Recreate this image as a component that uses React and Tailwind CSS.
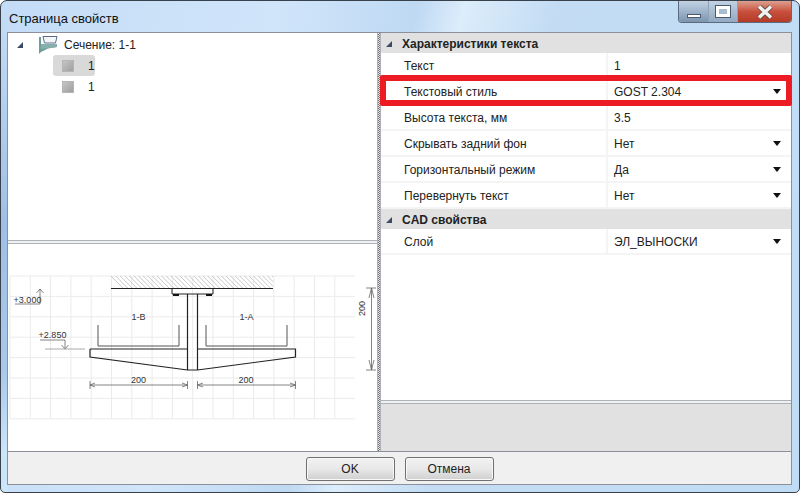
const rows1 = [
  { name: "Текст", value: "1" },
  { name: "Текстовый стиль", value: "GOST 2.304", drop: true },
  { name: "Высота текста, мм", value: "3.5" },
  { name: "Скрывать задний фон", value: "Нет", drop: true },
  { name: "Горизонтальный режим", value: "Да", drop: true },
  { name: "Перевернуть текст", value: "Нет", drop: true },
];
const rows2 = [{ name: "Слой", value: "ЭЛ_ВЫНОСКИ", drop: true }];

function Expander({ className }) {
  return (
    <svg width="6" height="6" viewBox="0 0 6 6" className={className}>
      <path d="M6 0V6H0Z" fill="#3b4a66" />
    </svg>
  );
}

function ItemIcon() {
  return (
    <svg width="12" height="12" viewBox="0 0 12 12" className="shrink-0">
      <defs>
        <linearGradient id="sq" x1="0" y1="0" x2="1" y2="1">
          <stop offset="0" stopColor="#c8c8c8" />
          <stop offset="1" stopColor="#9c9c9c" />
        </linearGradient>
      </defs>
      <rect x="0.5" y="0.5" width="11" height="11" fill="url(#sq)" stroke="#b5b5b5" />
    </svg>
  );
}

function SectionIcon() {
  return (
    <svg width="20" height="20" viewBox="0 0 20 20" className="shrink-0">
      <path d="M1 2V19L3 17L10 13.5L19 12H3V2Z" fill="#6f9d9c" />
      <path d="M5 1.5H19L17.5 8H6.5Z" fill="#f4f7f8" stroke="#5a6b8a" strokeWidth="1" />
      <path d="M3 9L19 9V12L3 14Z" fill="#86b0ad" />
    </svg>
  );
}

function Row({ name, value, drop }) {
  return (
    <div className="flex h-[26px] border-b-2 border-[#f4f4f4]">
      <div className="w-[227px] pl-[23px] pt-[4px] border-r-2 border-[#f4f4f4] text-[#222]">{name}</div>
      <div className="flex-1 flex justify-between pl-[6px] pr-[10px] pt-[4px] text-[#222]">
        <span>{value}</span>
        {drop && (
          <svg width="8" height="5" viewBox="0 0 8 5" className="mt-[6px]">
            <path d="M0 0H8L4 5Z" fill="#111" />
          </svg>
        )}
      </div>
    </div>
  );
}

function Group({ title, rows }) {
  return (
    <div>
      <div className="flex h-[20px] items-center bg-[#e1e1e1] pl-[5px] pt-[1px] font-bold text-[#222]">
        <Expander className="mr-[10px]" />
        <span>{title}</span>
      </div>
      {rows.map((r) => (
        <Row key={r.name} {...r} />
      ))}
    </div>
  );
}

function Preview() {
  const xs = Array.from({ length: 17 }, (_, i) => 10 + i * 20.3);
  const ys = Array.from({ length: 8 }, (_, i) => 276 + i * 20.4);
  const hatch = Array.from({ length: 36 }, (_, i) => 111 + i * 4.6);
  const Y = 244;
  const X = 8;
  return (
    <svg width="369" height="206" viewBox={`${X} ${Y} 369 206`} className="block">
      <g stroke="#ebebeb" strokeWidth="1">
        {xs.map((x) => (
          <line key={x} x1={x} x2={x} y1="276" y2="418" />
        ))}
        {ys.map((y) => (
          <line key={y} x1="10" x2="355" y1={y} y2={y} />
        ))}
      </g>
      <g stroke="#c2c2c2" strokeWidth="0.9">
        {hatch.map((x) => (
          <line key={x} x1={x} y1="276" x2={Math.min(x + 12, 273)} y2={288 - Math.max(0, x + 12 - 273)} />
        ))}
      </g>
      <g stroke="#222" fill="none" strokeWidth="1">
        <path d="M111 288.5H273" />
        <path d="M172 289V294H213V289" />
        <path d="M98 325V346H179V325" stroke="#555" />
        <path d="M206 325V346H287V325" stroke="#555" />
        <path d="M187.5 294V370M197.5 294V370" strokeWidth="1.2" />
        <path d="M90 349H187.5M197.5 349H295.5V357L197.5 370H187.5L90 357V349" strokeWidth="1.2" />
      </g>
      <rect x="173" y="294" width="6" height="2" fill="#111" />
      <rect x="206" y="294" width="6" height="2" fill="#111" />
      <g stroke="#666" fill="none" strokeWidth="0.8">
        <path d="M90 385H187.5M90 381V389M187.5 381V389M90 385L95 383M90 385L95 387M187.5 385L182 383M187.5 385L182 387" />
        <path d="M197.5 385H295.5M197.5 381V389M295.5 381V389M197.5 385L203 383M197.5 385L203 387M295.5 385L290 383M295.5 385L290 387" />
        <path d="M371.5 288V370M366 288H376M366 370H376M371.5 288L369 298M371.5 288L374 298M371.5 370L369 360M371.5 370L374 360" />
        <path d="M15 304H40V289M40 289L36.5 293M40 289L43.5 293" />
        <path d="M40 340H65V349M65 349L61.5 345M65 349L68.5 345" />
      </g>
      <path d="M45 349H85" stroke="#aaa" strokeWidth="1" />
      <g fontFamily="'Liberation Sans', sans-serif" fontSize="9" fill="#333" textAnchor="middle">
        <text x="138.5" y="383">200</text>
        <text x="246" y="383">200</text>
        <text x="138.5" y="320">1-B</text>
        <text x="246.5" y="320">1-A</text>
        <text x="27.5" y="302.5">+3.000</text>
        <text x="52.5" y="337.5">+2.850</text>
        <text x="0" y="0" transform="translate(365 308.5) rotate(-90)">200</text>
      </g>
    </svg>
  );
}

function Splitter() {
  return <div className="w-[4px] shrink-0 bg-[repeating-conic-gradient(#707070_0_25%,#e8e8e8_0_50%)] bg-[length:2px_2px] border-x border-[#aeb2ba]" />;
}

function HSplitter() {
  return <div className="h-[4px] shrink-0 bg-[#f0f0f0] border-y border-[#aeb2ba]" />;
}

function Button({ children }) {
  return (
    <button className="w-[89px] h-[24px] rounded-[3px] border border-[#707070] bg-gradient-to-b from-[#f2f2f2] via-[#e8e8e8] to-[#cfcfcf] text-[#222] shadow-[inset_0_0_0_1px_#f8f8f8]">
      {children}
    </button>
  );
}

export default function App() {
  return (
    <div
      className="w-[800px] h-[493px] overflow-hidden flex flex-col border border-[#39424c] rounded-t-[7px] rounded-b-[5px] [background:linear-gradient(180deg,#c6def7_0%,#9fc0e6_45%,#a8c8ec_75%,#cbe5fa_92%)_left/7px_100%_no-repeat,linear-gradient(105deg,#c4dcf6_0%,#d0e5fa_30%,#bfd9f3_45%,#dcedfb_50%,#c3dcf4_60%,#c0dcf5_100%)] text-[12px] font-['Liberation_Sans',sans-serif]"
    >
      <div className="flex justify-between h-[31px] shrink-0 pl-[8px] pr-[7px]">
        <span className="pt-[8px] text-[13px] text-[#111]">Страница свойств</span>
        <div className="flex h-[22px] rounded-b-[4px] border border-t-0 border-[#5a6b80] overflow-hidden">
          <div className="w-[30px] border-r border-[#8fa3b8] bg-gradient-to-b from-[#c2d2e3] via-[#9fb4cb] to-[#7d95af] flex items-end justify-center pb-[4px]">
            <div className="w-[14px] h-[4px] bg-white border border-[#4a5a6e]" />
          </div>
          <div className="w-[29px] border-r border-[#8fa3b8] bg-gradient-to-b from-[#c2d2e3] via-[#a8bcd2] to-[#94aac3] flex items-center justify-center">
            <div className="w-[14px] h-[11px] border-[3px] border-white outline outline-1 outline-[#4a5a6e] bg-[#a8bcd2]" />
          </div>
          <div className="w-[53px] bg-gradient-to-b from-[#dc9f90] via-[#c8503c] to-[#b43a28] flex items-center justify-center">
            <svg width="16" height="14" viewBox="0 0 16 14">
              <path d="M2 1.5L14 12.5M14 1.5L2 12.5" stroke="#5a4a48" strokeWidth="5" />
              <path d="M2 1.5L14 12.5M14 1.5L2 12.5" stroke="#f2f2f2" strokeWidth="3.4" />
            </svg>
          </div>
        </div>
      </div>

      <div className="flex flex-col mx-[6px] w-[785px] h-[453px] border border-[#8c9098] bg-[#f0f0f0]">
        <div className="flex h-[418px] shrink-0">
          <div className="w-[369px] shrink-0 flex flex-col">
            <div className="h-[207px] shrink-0 bg-white pt-[2px] text-[#222]">
              <div className="flex items-center h-[20px] pl-[9px]">
                <Expander className="mr-[15px]" />
                <SectionIcon />
                <span className="ml-[6px]">Сечение: 1-1</span>
              </div>
              <div className="flex items-center h-[21px] w-[42px] ml-[45px] pl-[9px] rounded-[3px] bg-[#d9d9d9]">
                <ItemIcon />
                <span className="ml-[14px]">1</span>
              </div>
              <div className="flex items-center h-[21px] ml-[54px]">
                <ItemIcon />
                <span className="ml-[14px]">1</span>
              </div>
            </div>
            <HSplitter />
            <div className="flex-1 bg-white overflow-hidden">
              <Preview />
            </div>
          </div>
          <Splitter />
          <div className="flex-1 flex flex-col min-w-0">
            <div className="h-[367px] shrink-0 bg-white relative">
              <Group title="Характеристики текста" rows={rows1} />
              <Group title="CAD свойства" rows={rows2} />
              <div className="absolute left-[-1px] top-[42px] w-[412px] h-[31px] border-[6px] border-[#ed1c24] rounded-[2px] pointer-events-none" />
            </div>
            <HSplitter />
            <div className="flex-1 bg-[#e1e1e1]" />
          </div>
        </div>
        <div className="flex-1 border-t border-[#8c9098] flex items-center justify-center gap-[10px] pt-[1px]">
          <Button>OK</Button>
          <Button>Отмена</Button>
        </div>
      </div>
    </div>
  );
}
